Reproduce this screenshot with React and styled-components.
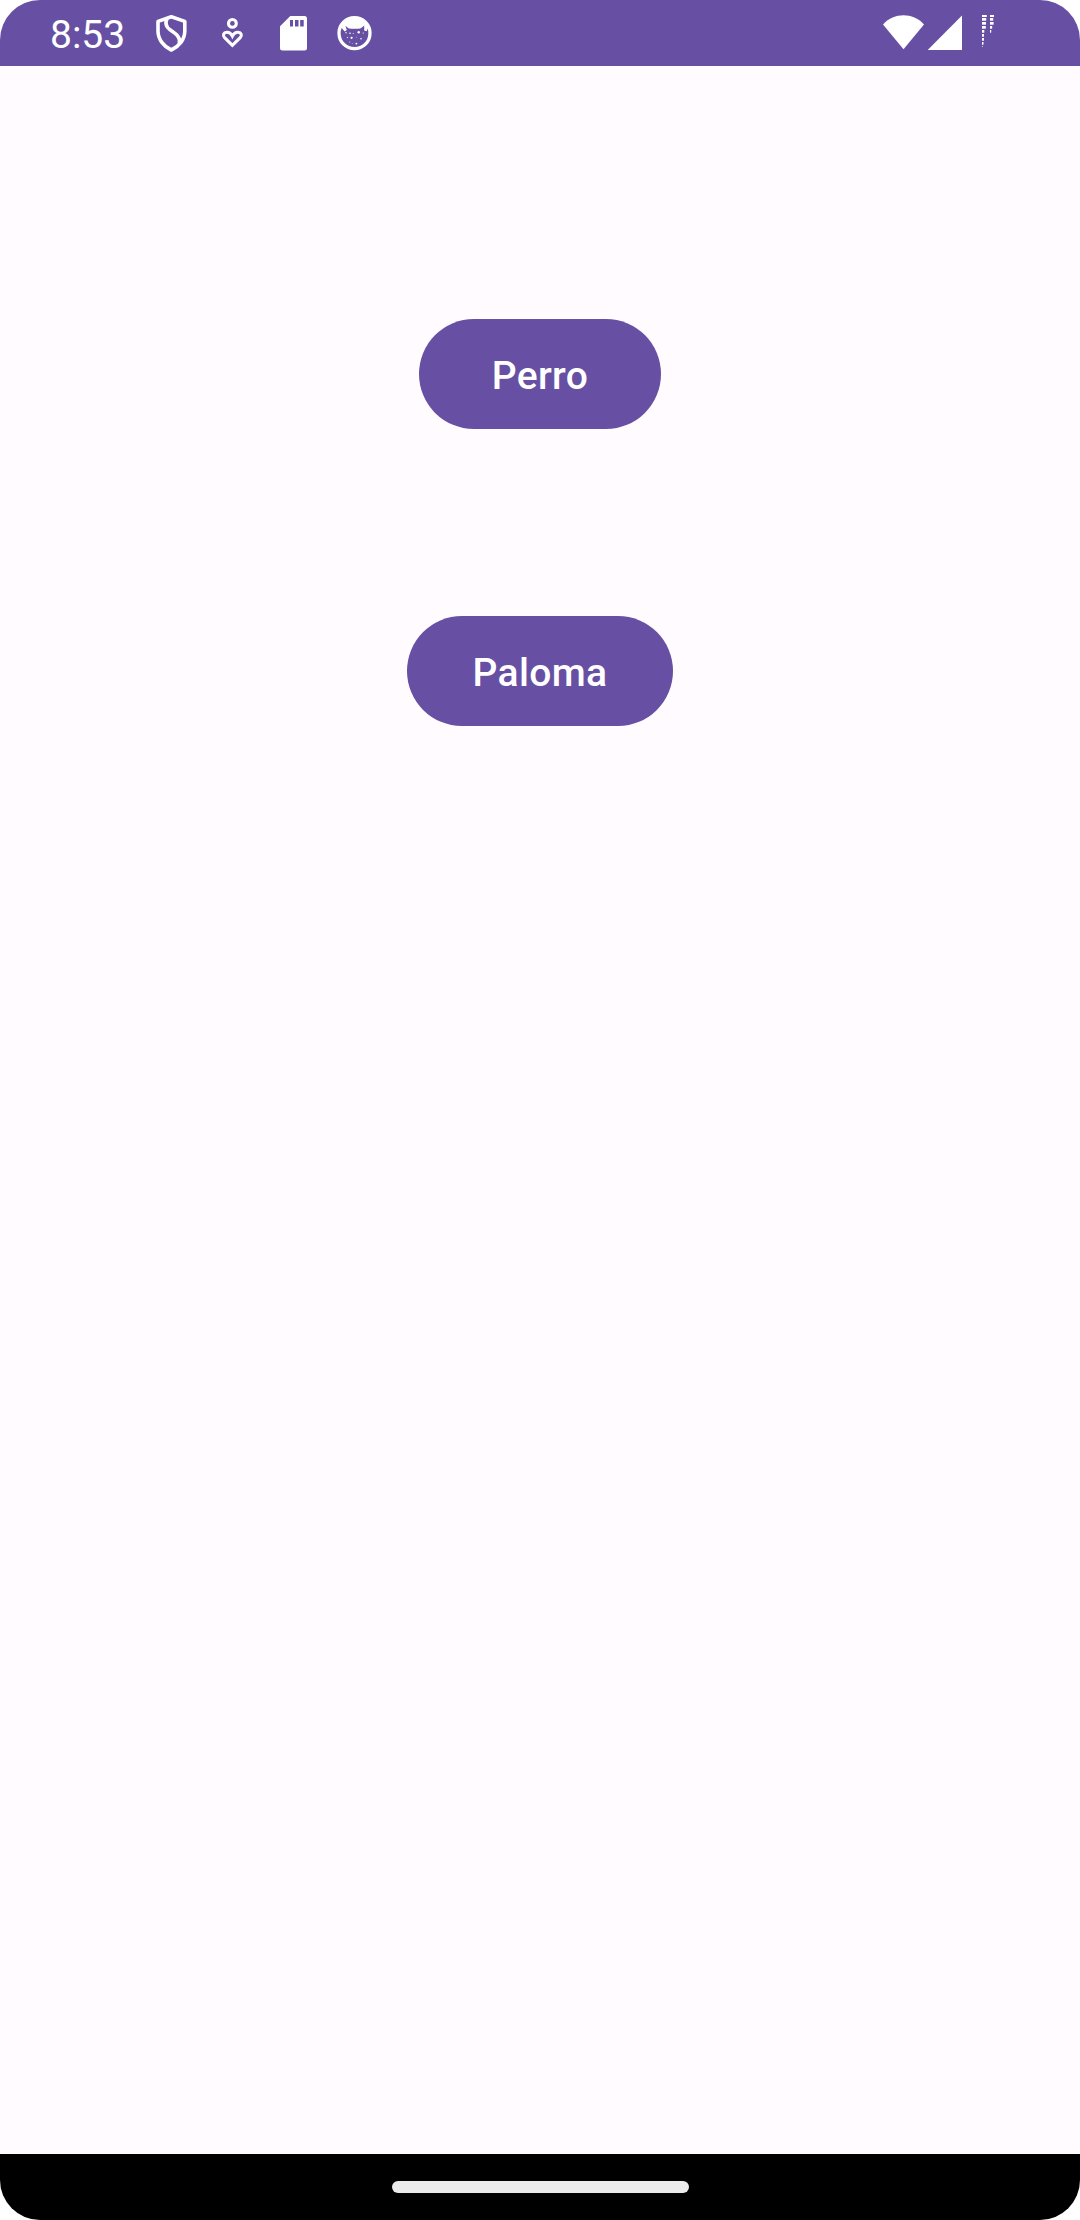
import React from "react";
import styled, { createGlobalStyle } from "styled-components";

const GlobalStyle = createGlobalStyle`
  body {
    margin: 0;
    background: #ffffff;
  }
`;

const Screen = styled.div`
  display: flex;
  flex-direction: column;
  width: 1080px;
  height: 2220px;
  overflow: hidden;
  border-radius: 40px;
  background: #fffbfe;
  font-family: Roboto, "Liberation Sans", sans-serif;
`;

const StatusBar = styled.header`
  display: flex;
  flex: none;
  height: 66px;
  background: #6750a3;
  color: #ffffff;
`;

const Clock = styled.time`
  box-sizing: border-box;
  width: 141px;
  padding-left: 50px;
  font-size: 39px;
  line-height: 70px;
  white-space: nowrap;
`;

const Slot = styled.svg`
  flex: none;
  width: ${(p) => p.$width || 61}px;
  height: 66px;
  margin-left: ${(p) => (p.$end ? "auto" : 0)};
  margin-right: ${(p) => (p.$end ? 80 : 0)}px;
`;

const Content = styled.main`
  display: flex;
  flex: 1;
  flex-direction: column;
  align-items: center;
  gap: 187px;
  padding-top: 253px;
`;

const FilledButton = styled.button`
  box-sizing: border-box;
  min-width: 242px;
  height: 110px;
  padding: 3px 66px 0;
  border: 0;
  border-radius: 55px;
  background: #6750a3;
  color: #ffffff;
  font-family: inherit;
  font-size: 39px;
  font-weight: 500;
  letter-spacing: 0.34px;
  line-height: 46px;
`;

const NavBar = styled.footer`
  display: flex;
  flex: none;
  align-items: flex-start;
  justify-content: center;
  height: 66px;
  background: #000000;
`;

const Handle = styled.div`
  width: 297px;
  height: 12px;
  margin-top: 27px;
  border-radius: 6px;
  background: #ebebeb;
`;

const ShieldIcon = () => (
  <Slot viewBox="0 0 61 66" fill="none" stroke="#fff" strokeWidth="3.6" strokeLinejoin="round">
    <path d="M30.3 16.8 L43.8 21.4 V31 C43.8 39.5 38 46.5 30.3 50 C22.8 46.5 17 39.5 17 31 V21.4 Z" />
    <path d="M26 18.5 C23.8 23.5 25 27 29 29.8 C34.5 33.5 39.8 36.5 38.2 43.2" />
  </Slot>
);

const WellbeingIcon = () => (
  <Slot viewBox="0 0 61 66" fill="none" stroke="#fff" strokeWidth="3.1">
    <circle cx="30.4" cy="23.4" r="3.9" />
    <path d="M30.4 45.4 L22.6 37.7 C20.4 35.3 21.6 32.4 24.8 32.2 C27.6 32.1 29.4 33.9 30.4 36 C31.4 33.9 33.2 32.1 36 32.2 C39.2 32.4 40.4 35.3 38.2 37.7 Z" />
  </Slot>
);

const SdCardIcon = () => (
  <Slot viewBox="0 0 61 66">
    <path
      fill="#fff"
      fillRule="evenodd"
      d="M27.3 16 H41.5 Q44 16 44 18.5 V48 Q44 50.5 41.5 50.5 H19.5 Q17 50.5 17 48 V26.2 Z M27 20 V26.5 H30 V20 Z M32 20 V26.5 H35.5 V20 Z M37.2 20 V26.5 H40.7 V20 Z"
    />
  </Slot>
);

const SPECKS = [
  [22, 32.8, 0.7], [26, 33.3, 0.8], [29.2, 33.5, 0.5], [34.7, 32.2, 1.2],
  [39.2, 33, 0.6], [23.5, 37.5, 0.6], [27.6, 37.8, 1.1], [32.5, 37.2, 0.4],
  [37, 38.7, 0.8], [25.8, 42, 0.5], [32.4, 43.6, 0.9], [28.3, 43.4, 0.4],
];

const CatIcon = () => (
  <Slot viewBox="0 0 61 66" fill="#fff">
    <circle cx="30.5" cy="33.2" r="15.5" fill="none" stroke="#fff" strokeWidth="3.3" />
    <path d="M16.7 27 C18.5 21 24 17.5 30.5 17.5 C37 17.5 42.5 21 44.4 27 L42.6 31.2 L40.2 30.4 L40.2 25.6 C38.8 26.8 37.5 28.2 36.2 28.4 C32.7 29 28.5 29 25 28.4 C23.8 28 22.6 26.5 21.4 25.8 L22.8 30 L20.8 31.6 L18.5 29 Z" />
    {SPECKS.map(([x, y, r]) => (
      <circle key={`${x}-${y}`} cx={x} cy={y} r={r} />
    ))}
  </Slot>
);

const DASHES = [
  { x: 102, widths: [4.8, 4.2, 4, 3.8, 2.3, 2, 2, 1.5, 0.8] },
  { x: 110, widths: [4, 3.2, 3.6, 2.2, 1.2] },
];
const DASH_TOPS = [15, 18, 22, 26, 30, 34, 38, 42, 46];

const SystemIcons = () => (
  <Slot $width={120} $end viewBox="0 0 120 66" fill="#fff">
    <path d="M3 24.4 C14.5 12.3 32.5 12.3 44 24.4 L23.5 49.3 Z" />
    <path d="M47.7 50 L82 15.4 V50 Z" />
    {DASHES.map(({ x, widths }) =>
      widths.map((w, i) => (
        <rect key={`${x}-${i}`} x={x} y={DASH_TOPS[i]} width={w} height={i === 0 ? 2 : i === 8 ? 0.8 : 2.7} />
      ))
    )}
  </Slot>
);

export default function App() {
  return (
    <Screen>
      <GlobalStyle />
      <StatusBar>
        <Clock>8:53</Clock>
        <ShieldIcon />
        <WellbeingIcon />
        <SdCardIcon />
        <CatIcon />
        <SystemIcons />
      </StatusBar>
      <Content>
        <FilledButton>Perro</FilledButton>
        <FilledButton>Paloma</FilledButton>
      </Content>
      <NavBar>
        <Handle />
      </NavBar>
    </Screen>
  );
}
